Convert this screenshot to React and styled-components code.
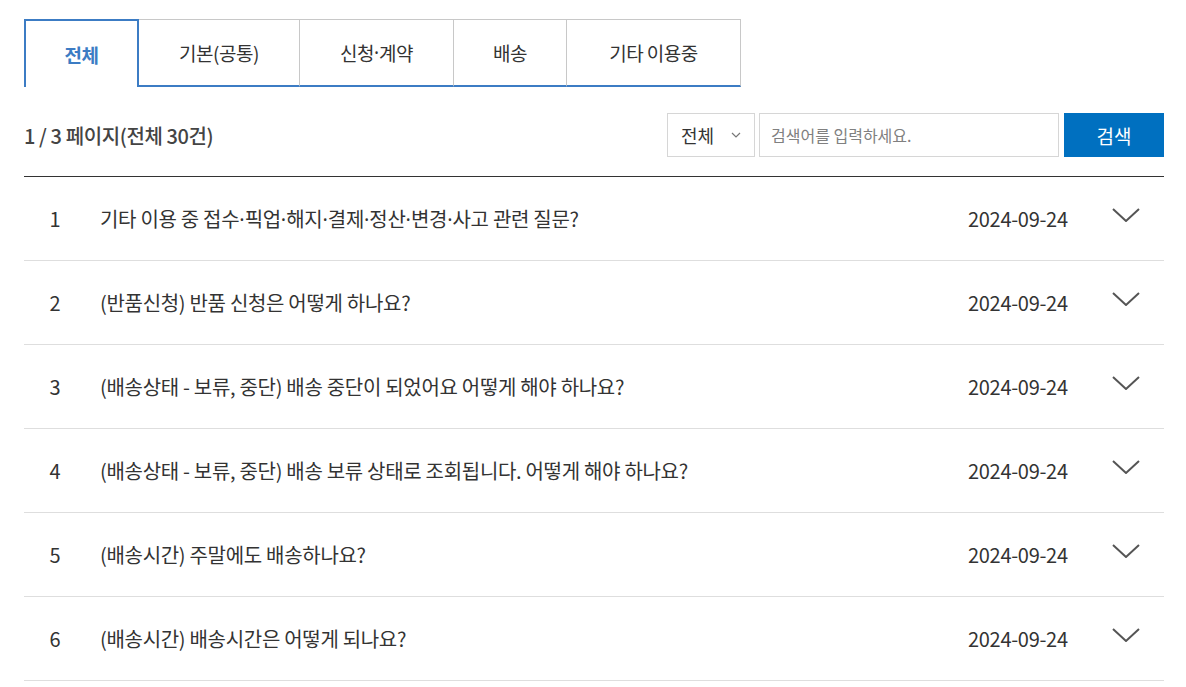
import React from "react";
import styled, { createGlobalStyle } from "styled-components";

const Global = createGlobalStyle`
  html, body { margin: 0; padding: 0; background: #fff; }
  body { font-family: "Noto Sans CJK KR", "Noto Sans", sans-serif; color: #333; }
  * { box-sizing: border-box; }
`;

const Page = styled.div`
  width: 1140px;
  margin-left: 24px;
  padding-top: 19px;
`;

const Tabs = styled.ul`
  display: flex;
  list-style: none;
  margin: 0;
  padding: 0;
`;

const Tab = styled.li`
  height: 68px;
  display: flex;
  align-items: center;
  justify-content: center;
  width: ${(p) => p.$w}px;
  font-size: 19px;
  letter-spacing: -0.5px;
  cursor: pointer;
  color: ${(p) => (p.$active ? "#3c7cc4" : "#333")};
  font-weight: ${(p) => (p.$active ? 700 : 400)};
  border-top: ${(p) => (p.$active ? "2px solid #3c7cc4" : "1px solid #c8c8c8")};
  border-left: ${(p) => (p.$active ? "2px solid #3c7cc4" : "none")};
  border-right: ${(p) => (p.$active ? "2px solid #3c7cc4" : "1px solid #c8c8c8")};
  border-bottom: ${(p) => (p.$active ? "none" : "2px solid #3c7cc4")};
`;

const Dot = styled.span`
  font-family: "Noto Sans", sans-serif;
  letter-spacing: 0;
`;

const Toolbar = styled.div`
  margin-top: 26px;
  height: 44px;
  display: flex;
  align-items: center;
  justify-content: space-between;
`;

const Count = styled.div`
  font-size: 20px;
  font-weight: 500;
  color: #444;
  letter-spacing: -0.4px;
`;

const SearchForm = styled.form`
  display: flex;
  height: 44px;
  gap: 4px;
`;

const Select = styled.div`
  width: 88px;
  height: 44px;
  border: 1px solid #d6d6d6;
  display: flex;
  align-items: center;
  padding-left: 13px;
  gap: 17px;
  font-size: 18px;
  color: #333;
`;

const Input = styled.input`
  width: 300px;
  height: 44px;
  border: 1px solid #d6d6d6;
  padding: 0 11px;
  font-family: inherit;
  font-size: 16px;
  letter-spacing: 0;
  color: #333;
  outline: none;
  &::placeholder { color: #808080; }
`;

const Button = styled.button`
  width: 100px;
  height: 44px;
  margin-left: 1px;
  border: none;
  background: #0070c0;
  color: #fff;
  font-family: inherit;
  font-size: 19px;
  cursor: pointer;
`;

const List = styled.ul`
  list-style: none;
  margin: 19px 0 0;
  padding: 0;
  border-top: 1px solid #333;
`;

const Row = styled.li`
  height: 84px;
  display: flex;
  align-items: center;
  border-bottom: 1px solid #dedede;
  font-size: 20px;
  color: #333;
  letter-spacing: -0.3px;
`;

const Num = styled.span`
  width: 62px;
  text-align: center;
  flex-shrink: 0;
`;

const Title = styled.span`
  flex: 1;
  margin-left: 14px;
`;

const DateText = styled.span`
  width: 100px;
`;

const Toggle = styled.span`
  width: 96px;
  display: flex;
  justify-content: flex-end;
  padding-right: 24px;
  margin-top: -8px;
`;

const Chevron = ({ w = 28, h = 14, color = "#555", sw = 2 }) => (
  <svg width={w} height={h} viewBox={`0 0 ${w} ${h}`} fill="none">
    <polyline
      points={`1,1 ${w / 2},${h - 1} ${w - 1},1`}
      stroke={color}
      strokeWidth={sw}
    />
  </svg>
);

const withDots = (text) =>
  text.split("·").flatMap((part, i) =>
    i === 0 ? [part] : [<Dot key={i}>·</Dot>, part]
  );

const tabs = [
  { label: "전체", w: 115, active: true },
  { label: "기본(공통)", w: 161 },
  { label: "신청·계약", w: 154 },
  { label: "배송", w: 113 },
  { label: "기타 이용중", w: 174 },
];

const items = [
  "기타 이용 중 접수·픽업·해지·결제·정산·변경·사고 관련 질문?",
  "(반품신청) 반품 신청은 어떻게 하나요?",
  "(배송상태 - 보류, 중단) 배송 중단이 되었어요 어떻게 해야 하나요?",
  "(배송상태 - 보류, 중단) 배송 보류 상태로 조회됩니다. 어떻게 해야 하나요?",
  "(배송시간) 주말에도 배송하나요?",
  "(배송시간) 배송시간은 어떻게 되나요?",
];

export default function App() {
  return (
    <>
      <Global />
      <Page>
        <Tabs>
          {tabs.map((t) => (
            <Tab key={t.label} $w={t.w} $active={t.active}>
              {withDots(t.label)}
            </Tab>
          ))}
        </Tabs>
        <Toolbar>
          <Count>1 / 3 페이지(전체 30건)</Count>
          <SearchForm onSubmit={(e) => e.preventDefault()}>
            <Select>
              전체
              <Chevron w={10} h={6} color="#777" sw={1.2} />
            </Select>
            <Input placeholder="검색어를 입력하세요." />
            <Button type="submit">검색</Button>
          </SearchForm>
        </Toolbar>
        <List>
          {items.map((q, i) => (
            <Row key={i}>
              <Num>{i + 1}</Num>
              <Title>{withDots(q)}</Title>
              <DateText>2024-09-24</DateText>
              <Toggle>
                <Chevron />
              </Toggle>
            </Row>
          ))}
        </List>
      </Page>
    </>
  );
}
